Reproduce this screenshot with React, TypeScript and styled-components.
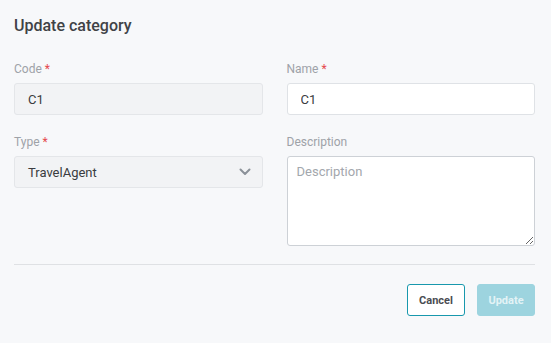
import React from "react";
import styled, { createGlobalStyle } from "styled-components";

const Global = createGlobalStyle`
  html, body { margin: 0; padding: 0; background: #f7f8fa; }
  body { font-family: Roboto, "Liberation Sans", Arial, sans-serif; }
  * { box-sizing: border-box; }
`;

const Page = styled.div`
  width: 551px;
  height: 343px;
  padding: 14px 16px 0 14px;
  background: #f7f8fa;
`;

const Title = styled.h2`
  margin: 0;
  font-size: 16px;
  line-height: 24px;
  font-weight: 500;
  color: #404246;
`;

const Grid = styled.div`
  margin-top: 23px;
  display: grid;
  grid-template-columns: 1fr 1fr;
  column-gap: 24px;
  row-gap: 19px;
`;

const Field = styled.div`
  display: flex;
  flex-direction: column;
`;

const Label = styled.label`
  font-size: 12px;
  line-height: 16px;
  color: #9ea2a8;
  margin-bottom: 6px;
`;

const Req = styled.span`
  color: #e5484d;
  margin-left: 3px;
`;

const Input = styled.input<{ $disabled?: boolean }>`
  height: 32px;
  border: 1px solid ${(p) => (p.$disabled ? "#e4e6e9" : "#dfe2e6")};
  background: ${(p) => (p.$disabled ? "#f2f3f5" : "#ffffff")};
  border-radius: 3px;
  padding: 0 13px;
  font-family: inherit;
  font-size: 13px;
  color: #3a3c40;
  outline: none;
`;

const SelectBox = styled.div`
  height: 32px;
  border: 1px solid #e4e6e9;
  background: #f2f3f5;
  border-radius: 3px;
  padding: 0 11px 0 13px;
  display: flex;
  align-items: center;
  justify-content: space-between;
  font-size: 13px;
  color: #3a3c40;
`;

const TextArea = styled.textarea`
  height: 90px;
  border: 1px solid #cdd1d6;
  background: #ffffff;
  border-radius: 3px;
  padding: 7px 9px;
  font-family: inherit;
  font-size: 13px;
  color: #3a3c40;
  outline: none;
  resize: vertical;
  &::placeholder { color: #a3a7ad; }
`;

const Divider = styled.hr`
  margin: 18px 0 0 0;
  border: none;
  border-top: 1px solid #dfe1e4;
`;

const Actions = styled.div`
  display: flex;
  justify-content: flex-end;
  gap: 12px;
  margin-top: 19px;
`;

const Button = styled.button<{ $primary?: boolean }>`
  width: 58px;
  height: 32px;
  border-radius: 3px;
  font-family: inherit;
  font-size: 11px;
  font-weight: 700;
  cursor: pointer;
  border: 1px solid ${(p) => (p.$primary ? "#9dd4df" : "#1898ad")};
  background: ${(p) => (p.$primary ? "#9dd4df" : "#ffffff")};
  color: ${(p) => (p.$primary ? "#e3f3f6" : "#4a4d52")};
`;

const Chevron = () => (
  <svg width="12" height="8" viewBox="0 0 12 8" fill="none">
    <path d="M1.5 1.5 L6 6 L10.5 1.5" stroke="#8b9199" strokeWidth="2" strokeLinecap="round" strokeLinejoin="round" />
  </svg>
);

export default function App() {
  return (
    <>
      <Global />
      <Page>
        <Title>Update category</Title>
        <Grid>
          <Field>
            <Label>Code<Req>*</Req></Label>
            <Input $disabled readOnly value="C1" />
          </Field>
          <Field>
            <Label>Name<Req>*</Req></Label>
            <Input readOnly value="C1" />
          </Field>
          <Field>
            <Label>Type<Req>*</Req></Label>
            <SelectBox>
              <span>TravelAgent</span>
              <Chevron />
            </SelectBox>
          </Field>
          <Field>
            <Label>Description</Label>
            <TextArea placeholder="Description" />
          </Field>
        </Grid>
        <Divider />
        <Actions>
          <Button>Cancel</Button>
          <Button $primary disabled>Update</Button>
        </Actions>
      </Page>
    </>
  );
}
